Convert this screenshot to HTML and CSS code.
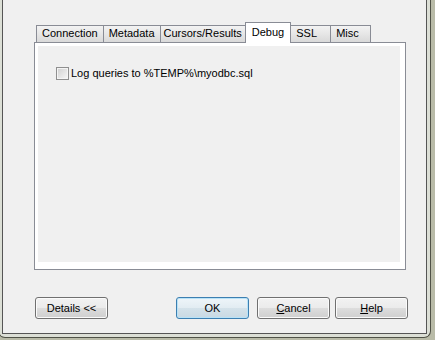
FILE: index.html
```html
<!DOCTYPE html>
<html lang="en">
<head>
  <meta charset="UTF-8">
  <title>Connector/ODBC - Debug</title>
  <link rel="stylesheet" href="styles.css">
</head>
<body>

  <div class="window">
    <div class="client">

      <!-- Tabs -->
      <div class="tabs">
        <div class="tab">Connection</div>
        <div class="tab">Metadata</div>
        <div class="tab tab-long">Cursors/Results</div>
        <div class="tab selected">Debug</div>
        <div class="tab">SSL</div>
        <div class="tab">Misc</div>
      </div>

      <div class="pane">
        <div class="page">
          <label class="check">
            <span class="box"></span>
            <span class="check-text">Log queries to %TEMP%\myodbc.sql</span>
          </label>
        </div>
      </div>

      <!-- Dialog buttons -->
      <div class="buttons">
        <button class="btn">Details &lt;&lt;</button>
        <button class="btn default ok-btn">OK</button>
        <button class="btn cancel-btn"><u>C</u>ancel</button>
        <button class="btn help-btn"><u>H</u>elp</button>
      </div>

    </div>
  </div>

</body>
</html>
```

FILE: styles.css
```css
* {
  box-sizing: border-box;
}

body {
  margin: 0;
  width: 435px;
  height: 340px;
  overflow: hidden;
  background: #b9bba8;
  font-family: 'Liberation Sans', Arial, sans-serif;
  font-size: 11px;
  color: #000;
}

/* window frame (top is cut off) */
.window {
  margin-left: -2px;
  width: 433px;
  height: 338px;
  border: 1px solid #4f5146;
  border-top: none;
  border-radius: 0 0 7px 7px;
  padding: 0 3px 3px;
  background: #dcdfd6;
}

.client {
  height: 334px;
  border: 1px solid #555;
  border-top: none;
  background: #f0f0f0;
  padding-top: 22px;
}

/* tab strip */
.tabs {
  display: flex;
  align-items: flex-end;
  height: 20px;
  padding-left: 33px;
}

.tab {
  min-width: 41px;
  height: 17px;
  border: 1px solid #898c95;
  border-bottom: none;
  margin-right: -1px;
  padding: 0 5px;
  line-height: 15px;
  background: linear-gradient(#f3f3f3, #e6e6e6 50%, #d9d9d9);
  white-space: nowrap;
}

.tab-long {
  padding: 0 3px;
}

.tab.selected {
  height: 21px;
  margin-bottom: -1px;
  padding: 2px 6px 0;
  background: #fff;
  position: relative;
  z-index: 1;
}

.pane {
  margin-left: 31px;
  width: 372px;
  height: 228px;
  border: 1px solid #898c95;
  background: #fff;
  padding: 3px 5px 7px 3px;
}

.page {
  height: 100%;
  background: #f0f0f0;
  padding: 21px 0 0 18px;
}

.check {
  display: flex;
  align-items: center;
  line-height: 13px;
}

.box {
  width: 13px;
  height: 13px;
  border: 1px solid #8f8f8f;
  background: linear-gradient(135deg, #cfcfcf, #f7f7f7);
  box-shadow: inset 0 0 0 1px #f4f4f4;
}

.check-text {
  margin-left: 2px;
}

/* buttons */
.buttons {
  display: flex;
  margin-top: 27px;
  padding-left: 32px;
}

.btn {
  width: 73px;
  height: 22px;
  padding: 0;
  border: 1px solid #707070;
  border-radius: 3px;
  background: linear-gradient(#f2f2f2, #ebebeb 50%, #dddddd 50%, #cfcfcf);
  box-shadow: inset 0 0 0 1px #fbfbfb;
  font-family: inherit;
  font-size: 11px;
  color: #000;
}

.btn u {
  text-underline-offset: 1px;
}

.btn.default {
  border-color: #3c7fb1;
  background: linear-gradient(#eef5f9, #e2ecf2 50%, #d4e2ea 50%, #c9d9e3);
  box-shadow: inset 0 0 0 1px #b8e2f7;
}

.ok-btn {
  margin-left: 68px;
}

.cancel-btn {
  margin-left: 8px;
}

.help-btn {
  margin-left: 5px;
}
```
